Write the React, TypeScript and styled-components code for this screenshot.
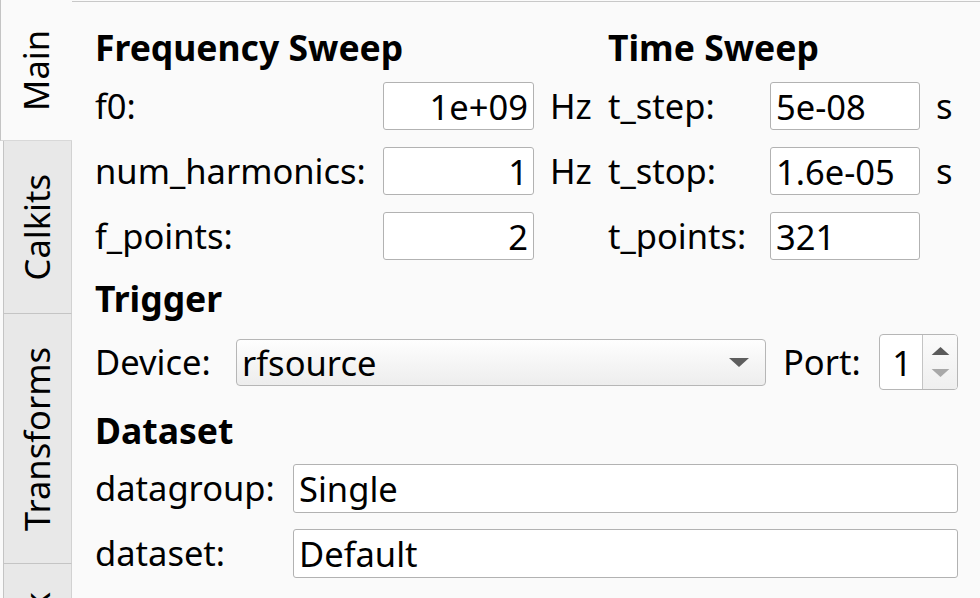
import React from "react";
import styled, { createGlobalStyle } from "styled-components";

const GlobalStyle = createGlobalStyle`
  html, body { margin: 0; padding: 0; background: #fafafa; }
  body { font-family: "Noto Sans", "DejaVu Sans", sans-serif; color: #000; }
  * { box-sizing: border-box; }
`;

const Window = styled.div`
  display: flex;
  width: 980px;
  height: 598px;
  overflow: hidden;
  background: #fafafa;
  font-size: 34.5px;
`;

const TabBar = styled.div`
  display: flex;
  flex-direction: column;
  width: 72px;
  flex: none;
`;

const Tab = styled.div<{ $selected?: boolean; $size: number }>`
  flex: none;
  height: ${(p) => p.$size}px;
  display: flex;
  align-items: center;
  justify-content: center;
  margin-left: ${(p) => (p.$selected ? 0 : 3)}px;
  background: ${(p) => (p.$selected ? "#fafafa" : "#e8e8e8")};
  border-left: 1px solid #c4c4c4;
  border-right: ${(p) => (p.$selected ? "none" : "1px solid #d2d2d2")};
  border-bottom: 1px solid ${(p) => (p.$selected ? "#d8d8d8" : "#c4c4c4")};
  overflow: hidden;
`;

const TabLabel = styled.span`
  writing-mode: vertical-rl;
  transform: rotate(180deg);
  white-space: nowrap;
  line-height: 1;
`;

const Panel = styled.div`
  flex: 1;
  margin-top: 1px;
  border-top: 1px solid #c8c8c8;
  padding: 27px 22px 0 23px;
  display: flex;
  flex-direction: column;
`;

const FormGrid = styled.div`
  display: grid;
  grid-template-columns: 272px 151px 42px 146px 150px auto;
  grid-template-rows: 36px repeat(3, 48px);
  column-gap: 16px;
  row-gap: 17px;
  align-items: center;
`;

const Title = styled.div<{ $span?: number; $top?: number }>`
  font-weight: 700;
  font-size: 35.5px;
  height: 36px;
  line-height: 36px;
  white-space: nowrap;
  margin-top: ${(p) => p.$top ?? 0}px;
  grid-column: span ${(p) => p.$span ?? 1};
`;

const Label = styled.span`
  white-space: nowrap;
  line-height: 1;
`;

const LineEdit = styled.input<{ $align?: "left" | "right"; $h?: number }>`
  width: 100%;
  height: ${(p) => p.$h ?? 48}px;
  border: 1px solid #b2b2b2;
  border-radius: 3px;
  background: #fff;
  font: inherit;
  color: #000;
  padding: 0 5px;
  text-align: ${(p) => p.$align ?? "left"};
  outline: none;
`;

const Empty = styled.span``;

const DeviceRow = styled.div`
  display: flex;
  align-items: center;
  height: 56px;
  margin-top: 18px;
`;

const FixedLabel = styled.span<{ $w: number; $ml?: number }>`
  flex: none;
  width: ${(p) => p.$w}px;
  margin-left: ${(p) => p.$ml ?? 0}px;
  white-space: nowrap;
  line-height: 1;
`;

const ComboBox = styled.div`
  flex: 1;
  height: 47px;
  display: flex;
  align-items: center;
  justify-content: space-between;
  padding: 0 16px 0 5px;
  border: 1px solid #b6b6b6;
  border-radius: 4px;
  background: linear-gradient(#fefefe, #ededed);
`;

const SpinBox = styled.div`
  flex: none;
  width: 79px;
  height: 56px;
  display: flex;
  border: 1px solid #b6b6b6;
  border-radius: 4px;
  background: #fff;
  overflow: hidden;
`;

const SpinValue = styled.div`
  flex: 1;
  display: flex;
  align-items: center;
  justify-content: flex-end;
  padding-right: 10px;
`;

const SpinButtons = styled.div`
  flex: none;
  width: 35px;
  border-left: 1px solid #c4c4c4;
  background: linear-gradient(#fbfbfb, #efefef);
  display: flex;
  flex-direction: column;
  align-items: center;
  justify-content: center;
  gap: 14px;
`;

const DatasetGrid = styled.div`
  display: grid;
  grid-template-columns: 198px 1fr;
  grid-auto-rows: 49px;
  row-gap: 16px;
  align-items: center;
  margin-top: 16px;
`;

const Arrow = ({ up, color, w = 20, h = 9 }: { up?: boolean; color: string; w?: number; h?: number }) => (
  <svg width={w} height={h} viewBox="0 0 20 9" style={{ display: "block" }}>
    <polygon points={up ? "0,9 20,9 10,0" : "0,0 20,0 10,9"} fill={color} />
  </svg>
);

export default function App() {
  return (
    <>
      <GlobalStyle />
      <Window>
        <TabBar>
          <Tab $selected $size={141}>
            <TabLabel>Main</TabLabel>
          </Tab>
          <Tab $size={173}>
            <TabLabel>Calkits</TabLabel>
          </Tab>
          <Tab $size={250}>
            <TabLabel>Transforms</TabLabel>
          </Tab>
          <Tab $size={196}>
            <TabLabel>Network</TabLabel>
          </Tab>
        </TabBar>
        <Panel>
          <FormGrid>
            <Title $span={3}>Frequency Sweep</Title>
            <Title $span={3}>Time Sweep</Title>

            <Label>f0:</Label>
            <LineEdit readOnly $align="right" defaultValue="1e+09" />
            <Label>Hz</Label>
            <Label>t_step:</Label>
            <LineEdit readOnly defaultValue="5e-08" />
            <Label>s</Label>

            <Label>num_harmonics:</Label>
            <LineEdit readOnly $align="right" defaultValue="1" />
            <Label>Hz</Label>
            <Label>t_stop:</Label>
            <LineEdit readOnly defaultValue="1.6e-05" />
            <Label>s</Label>

            <Label>f_points:</Label>
            <LineEdit readOnly $align="right" defaultValue="2" />
            <Empty />
            <Label>t_points:</Label>
            <LineEdit readOnly defaultValue="321" />
            <Empty />
          </FormGrid>

          <Title $top={20}>Trigger</Title>
          <DeviceRow>
            <FixedLabel $w={141}>Device:</FixedLabel>
            <ComboBox>
              <span>rfsource</span>
              <Arrow color="#5e5e5e" />
            </ComboBox>
            <FixedLabel $w={96} $ml={17}>Port:</FixedLabel>
            <SpinBox>
              <SpinValue>1</SpinValue>
              <SpinButtons>
                <Arrow up color="#5a5a5a" w={19} h={8} />
                <Arrow color="#a8a8a8" w={19} h={8} />
              </SpinButtons>
            </SpinBox>
          </DeviceRow>

          <Title $top={22}>Dataset</Title>
          <DatasetGrid>
            <Label>datagroup:</Label>
            <LineEdit readOnly $h={49} defaultValue="Single" />
            <Label>dataset:</Label>
            <LineEdit readOnly $h={49} defaultValue="Default" />
          </DatasetGrid>
        </Panel>
      </Window>
    </>
  );
}
